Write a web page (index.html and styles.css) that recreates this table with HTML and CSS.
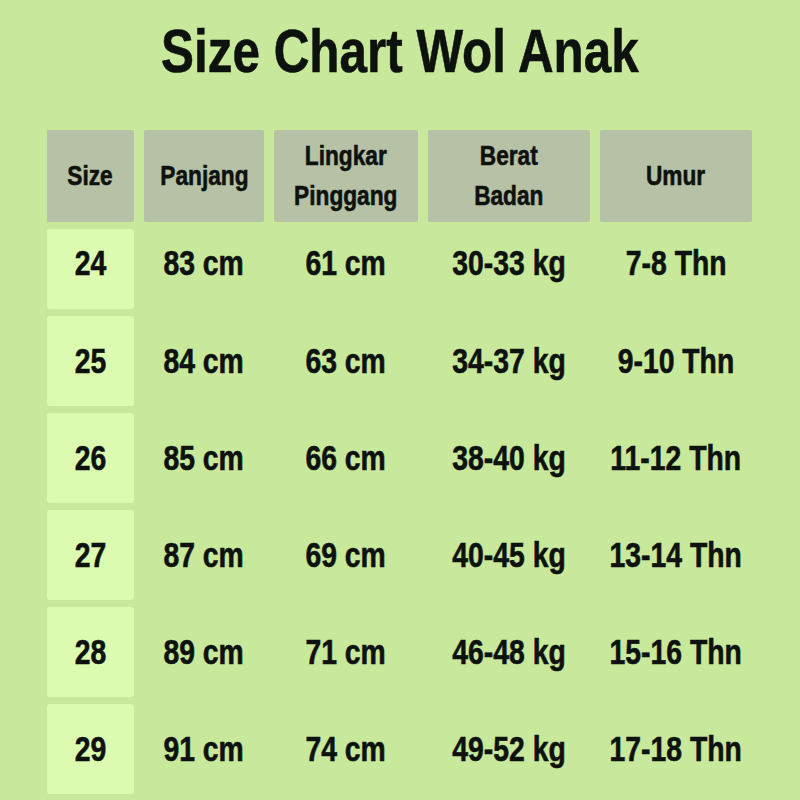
FILE: index.html
```html
<!DOCTYPE html>
<html lang="id">
<head>
<meta charset="utf-8">
<title>Size Chart Wol Anak</title>
<link rel="stylesheet" href="styles.css">
</head>
<body>
<main class="page">
  <h1 class="title"><span class="t">Size Chart Wol Anak</span></h1>
  <div class="chart">
    <div class="head"><span class="t">Size</span></div>
    <div class="head"><span class="t">Panjang</span></div>
    <div class="head"><span class="t">Lingkar<br>Pinggang</span></div>
    <div class="head"><span class="t">Berat<br>Badan</span></div>
    <div class="head"><span class="t">Umur</span></div>

    <div class="cell size first"><span class="t">24</span></div>
    <div class="cell first"><span class="t">83 cm</span></div>
    <div class="cell first"><span class="t">61 cm</span></div>
    <div class="cell first"><span class="t">30-33 kg</span></div>
    <div class="cell first"><span class="t">7-8 Thn</span></div>

    <div class="cell size"><span class="t">25</span></div>
    <div class="cell"><span class="t">84 cm</span></div>
    <div class="cell"><span class="t">63 cm</span></div>
    <div class="cell"><span class="t">34-37 kg</span></div>
    <div class="cell"><span class="t">9-10 Thn</span></div>

    <div class="cell size"><span class="t">26</span></div>
    <div class="cell"><span class="t">85 cm</span></div>
    <div class="cell"><span class="t">66 cm</span></div>
    <div class="cell"><span class="t">38-40 kg</span></div>
    <div class="cell"><span class="t">11-12 Thn</span></div>

    <div class="cell size"><span class="t">27</span></div>
    <div class="cell"><span class="t">87 cm</span></div>
    <div class="cell"><span class="t">69 cm</span></div>
    <div class="cell"><span class="t">40-45 kg</span></div>
    <div class="cell"><span class="t">13-14 Thn</span></div>

    <div class="cell size"><span class="t">28</span></div>
    <div class="cell"><span class="t">89 cm</span></div>
    <div class="cell"><span class="t">71 cm</span></div>
    <div class="cell"><span class="t">46-48 kg</span></div>
    <div class="cell"><span class="t">15-16 Thn</span></div>

    <div class="cell size"><span class="t">29</span></div>
    <div class="cell"><span class="t">91 cm</span></div>
    <div class="cell"><span class="t">74 cm</span></div>
    <div class="cell"><span class="t">49-52 kg</span></div>
    <div class="cell"><span class="t">17-18 Thn</span></div>
  </div>
</main>
</body>
</html>
```
FILE: styles.css
```css
html, body {
  margin: 0;
  padding: 0;
  background: #c8e89c;
}

.page {
  width: 800px;
  height: 800px;
  box-sizing: border-box;
  padding: 21px 0 0 47px;
  font-family: "Liberation Sans", Arial, sans-serif;
  font-weight: bold;
  color: #0e120e;
  overflow: hidden;
}

.t {
  display: inline-block;
  transform: scaleX(0.81);
  transform-origin: center;
  white-space: nowrap;
  -webkit-text-stroke: 0.6px currentColor;
}

.title {
  margin: 0 0 48px 0;
  width: 706px;
  text-align: center;
  font-size: 61px;
  line-height: 61px;
  font-weight: bold;
}

.chart {
  display: grid;
  grid-template-columns: 87px 120px 144px 162px 152px;
  grid-template-rows: 92px 80px repeat(5, 90px);
  column-gap: 10px;
  row-gap: 7px;
}

.head {
  background: #b6c1a6;
  border-radius: 2px;
  display: flex;
  align-items: center;
  justify-content: center;
  text-align: center;
  font-size: 28px;
  line-height: 40px;
}

.cell {
  display: flex;
  align-items: center;
  justify-content: center;
  font-size: 35px;
  line-height: 40px;
}

.cell.first {
  padding-bottom: 12px;
}

.cell.size {
  background: #dcfbb1;
  border-radius: 3px;
}
```
